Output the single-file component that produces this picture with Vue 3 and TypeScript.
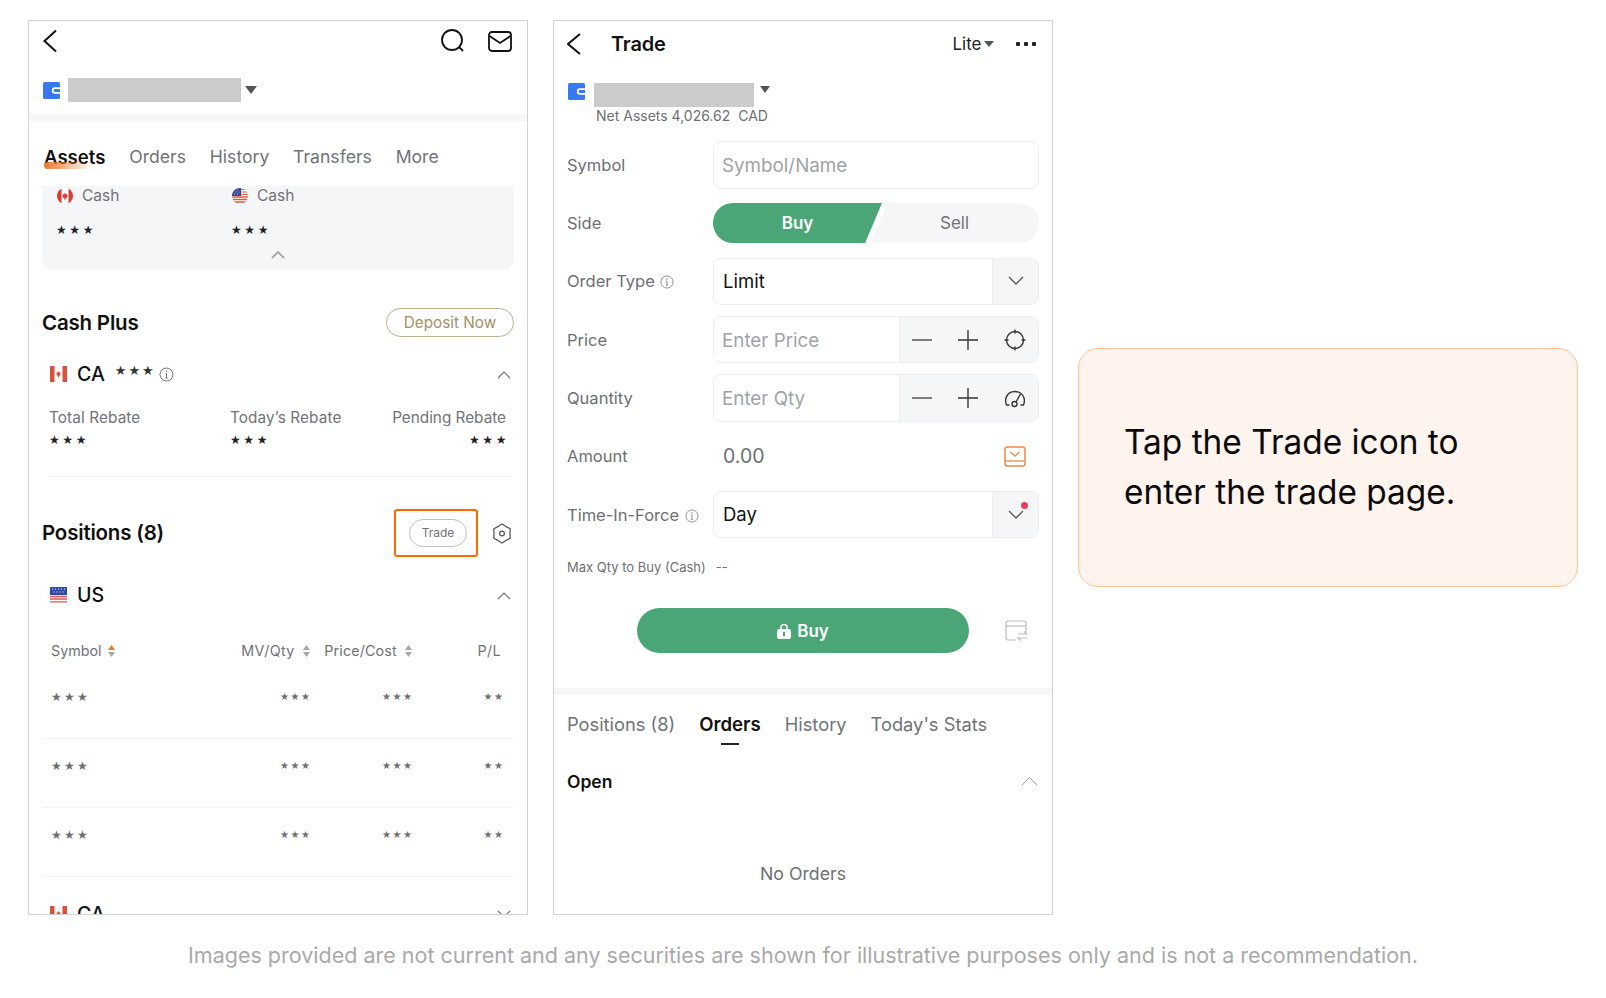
<script setup lang="ts">
const stockRows = [0, 1, 2]
const steppers = [
  { label: 'Price', placeholder: 'Enter Price', kind: 'target' },
  { label: 'Quantity', placeholder: 'Enter Qty', kind: 'gauge' },
]
</script>

<template>
  <div class="page">
    <div class="screens">
      <section class="phone">
        <header class="nav">
          <svg class="ic" width="16" height="24" viewBox="0 0 16 24"><path d="M13 1.500L1.500 12 13 22.500" fill="none" stroke="#111" stroke-width="2"/></svg>
          <span class="grow"></span>
          <svg class="ic" width="26" height="26" viewBox="0 0 26 26"><circle cx="12" cy="12" r="10" fill="none" stroke="#111" stroke-width="1.800"/><path d="M19 19l4 4" stroke="#111" stroke-width="1.800"/></svg>
          <svg class="ic mail" width="24" height="21" viewBox="0 0 24 21"><rect x="1" y="1" width="22" height="19" rx="3" fill="none" stroke="#111" stroke-width="1.800"/><path d="M1.500 5l10.500 7 10.500-7" fill="none" stroke="#111" stroke-width="1.800"/></svg>
        </header>

        <div class="account">
          <svg width="17" height="17" viewBox="0 0 17 17"><rect width="17" height="17" rx="1.500" fill="#3a78f2"/><path d="M17 6.200H12a2.300 2.300 0 0 0 0 4.600H17" fill="none" stroke="#fff" stroke-width="1.800"/></svg>
          <div class="mask wide"></div>
          <span class="caret"></span>
        </div>

        <div class="band"></div>

        <nav class="tabs">
          <span class="tab active">Assets<i class="swoosh"></i></span>
          <span class="tab">Orders</span>
          <span class="tab">History</span>
          <span class="tab">Transfers</span>
          <span class="tab">More</span>
        </nav>

        <div class="cash-card">
          <div class="cash-cols">
            <div class="cash-col">
              <div class="cash-label">
                <svg width="16" height="16" viewBox="0 0 16 16"><defs><clipPath id="rc"><circle cx="8" cy="8" r="8"/></clipPath></defs><g clip-path="url(#rc)"><rect width="16" height="16" fill="#fff"/><rect width="4.500" height="16" fill="#dd3a30"/><rect x="11.500" width="4.500" height="16" fill="#dd3a30"/><path d="M8 4.500l1 2 1.500-.5-.5 2.500 1 .3L8.500 10.500V12h-1v-1.500L5 8.800l1-.3L5.500 6l1.500.5z" fill="#dd3a30"/></g></svg>
                <span>Cash</span>
              </div>
              <div class="stars dark">★★★</div>
            </div>
            <div class="cash-col">
              <div class="cash-label">
                <svg width="16" height="16" viewBox="0 0 16 16"><defs><clipPath id="ru"><circle cx="8" cy="8" r="8"/></clipPath></defs><g clip-path="url(#ru)"><rect width="16" height="16" fill="#fff"/><path d="M0 9h16M0 11.500h16M0 14h16" stroke="#e0564c" stroke-width="1.300"/><path d="M0 1.500h16M0 4h16M0 6.500h16" stroke="#e0564c" stroke-width="1.100"/><rect width="9" height="8" fill="#36479b"/><path d="M2 2h.8M5 2h.8M3.500 4h.8M6.500 4h.8M2 6h.8M5 6h.8" stroke="#fff" stroke-width=".8"/></g></svg>
                <span>Cash</span>
              </div>
              <div class="stars dark">★★★</div>
            </div>
          </div>
          <div class="cash-fold">
            <svg width="14" height="9" viewBox="0 0 14 9"><path d="M1 8l6-6 6 6" fill="none" stroke="#a5a7ab" stroke-width="1.800"/></svg>
          </div>
        </div>

        <div class="section-head plus-head">
          <h2>Cash Plus</h2>
          <span class="deposit">Deposit Now</span>
        </div>

        <div class="market">
          <svg width="17" height="16" viewBox="0 0 17 16"><rect width="17" height="16" fill="#fff"/><rect width="4.500" height="16" fill="#d9503f"/><rect x="12.500" width="4.500" height="16" fill="#d9503f"/><path d="M8.500 5l.8 1.500 1.200-.3-.4 2 .9.300-2 1.600v1.400h-1V10.100L6 8.500l.9-.3-.4-2 1.200.3z" fill="#d9503f"/></svg>
          <strong>CA</strong>
          <span class="stars ca-stars">★★★</span>
          <svg class="info" width="15" height="15" viewBox="0 0 15 15"><circle cx="7.500" cy="7.500" r="6.500" fill="none" stroke="#777" stroke-width="1"/><path d="M7.500 6.500v4.500M6.300 11h2.400M6.500 6.500h1" stroke="#777" stroke-width="1" fill="none"/><circle cx="7.500" cy="4.200" r=".8" fill="#777"/></svg>
          <span class="grow"></span>
          <svg class="fold" width="14" height="9" viewBox="0 0 14 9"><path d="M1 8l6-6 6 6" fill="none" stroke="#6d6f73" stroke-width="1.100"/></svg>
        </div>

        <div class="rebates">
          <div class="rebate first"><span>Total Rebate</span><span class="stars dark">★★★</span></div>
          <div class="rebate second"><span>Today’s Rebate</span><span class="stars dark">★★★</span></div>
          <div class="rebate third"><span>Pending Rebate</span><span class="stars dark">★★★</span></div>
        </div>

        <div class="hair"></div>

        <div class="section-head pos-head">
          <h2>Positions (8)</h2>
          <div class="trade-box"><span class="trade-pill">Trade</span></div>
          <svg class="gear" width="20" height="21" viewBox="0 0 20 21"><path d="M10 1L14 3.570 18.230 5.750 18 10.500 18.230 15.250 14 17.430 10 20 6 17.430 1.770 15.250 2 10.500 1.770 5.750 6 3.570z" fill="none" stroke="#55585c" stroke-width="1.300" stroke-linejoin="round"/><circle cx="10" cy="10.500" r="2.400" fill="none" stroke="#55585c" stroke-width="1.300"/></svg>
        </div>

        <div class="market us">
          <svg width="17" height="16" viewBox="0 0 17 16"><rect width="17" height="16" fill="#fff"/><path d="M0 9.500h17M0 12h17M0 14.800h17" stroke="#e0564c" stroke-width="1.300"/><rect width="17" height="8" fill="#2f4aa6"/><path d="M2 2h1M5 2h1M8 2h1M11 2h1M14 2h1M3.500 5h1M6.500 5h1M9.500 5h1M12.500 5h1" stroke="#fff" stroke-width="1"/></svg>
          <strong>US</strong>
          <span class="grow"></span>
          <svg class="fold" width="14" height="9" viewBox="0 0 14 9"><path d="M1 8l6-6 6 6" fill="none" stroke="#6d6f73" stroke-width="1.100"/></svg>
        </div>

        <div class="thead">
          <span class="col-sym">Symbol
            <svg width="7" height="12" viewBox="0 0 7 12"><path d="M3.500 0L7 5H0z" fill="#ec7a2e"/><path d="M3.500 12L7 7H0z" fill="#a5a7ab"/></svg>
          </span>
          <span class="col-mv">MV/Qty
            <svg width="7" height="12" viewBox="0 0 7 12"><path d="M3.500 0L7 5H0z" fill="#a5a7ab"/><path d="M3.500 12L7 7H0z" fill="#a5a7ab"/></svg>
          </span>
          <span class="col-price">Price/Cost
            <svg width="7" height="12" viewBox="0 0 7 12"><path d="M3.500 0L7 5H0z" fill="#a5a7ab"/><path d="M3.500 12L7 7H0z" fill="#a5a7ab"/></svg>
          </span>
          <span class="col-pl">P/L</span>
        </div>

        <div v-for="r in stockRows" :key="r" class="trow">
          <span class="col-sym stars big">★★★</span>
          <span class="col-mv stars">★★★</span>
          <span class="col-price stars">★★★</span>
          <span class="col-pl stars">★★</span>
        </div>

        <div class="market last">
          <svg width="17" height="16" viewBox="0 0 17 16"><rect width="17" height="16" fill="#fff"/><rect width="4.500" height="16" fill="#d9503f"/><rect x="12.500" width="4.500" height="16" fill="#d9503f"/><path d="M8.500 5l.8 1.500 1.200-.3-.4 2 .9.300-2 1.600v1.400h-1V10.100L6 8.500l.9-.3-.4-2 1.200.3z" fill="#d9503f"/></svg>
          <strong>CA</strong>
          <span class="grow"></span>
          <svg class="fold" width="14" height="9" viewBox="0 0 14 9"><path d="M1 1l6 6 6-6" fill="none" stroke="#6d6f73" stroke-width="1.100"/></svg>
        </div>
      </section>

      <section class="phone">
        <header class="nav trade-nav">
          <svg class="ic" width="16" height="24" viewBox="0 0 16 24"><path d="M13 2L1 12l12 10" fill="none" stroke="#111" stroke-width="2"/></svg>
          <h1>Trade</h1>
          <span class="grow"></span>
          <span class="lite">Lite</span>
          <span class="caret small"></span>
          <span class="dots"><i></i><i></i><i></i></span>
        </header>

        <div class="account trade-account">
          <svg width="17" height="17" viewBox="0 0 17 17"><rect width="17" height="17" rx="1.500" fill="#3a78f2"/><path d="M17 6.200H12a2.300 2.300 0 0 0 0 4.600H17" fill="none" stroke="#fff" stroke-width="1.800"/></svg>
          <div class="mask narrow"></div>
          <span class="caret top"></span>
        </div>
        <div class="net">Net Assets 4,026.62&nbsp; CAD</div>

        <div class="form">
          <div class="frow">
            <label>Symbol</label>
            <div class="field"><span class="ph">Symbol/Name</span></div>
          </div>
          <div class="frow">
            <label>Side</label>
            <div class="side">
              <span class="buy">Buy</span>
              <span class="sell">Sell</span>
            </div>
          </div>
          <div class="frow">
            <label>Order Type
              <svg class="info tight" width="14" height="14" viewBox="0 0 15 15"><circle cx="7.500" cy="7.500" r="6.500" fill="none" stroke="#8a8c90" stroke-width="1"/><path d="M7.500 6.500v4.500M6.300 11h2.400M6.500 6.500h1" stroke="#8a8c90" stroke-width="1" fill="none"/><circle cx="7.500" cy="4.200" r=".8" fill="#8a8c90"/></svg>
            </label>
            <div class="field">
              <span class="val">Limit</span>
              <div class="addon single">
                <svg width="16" height="10" viewBox="0 0 16 10"><path d="M1 1l7 7 7-7" fill="none" stroke="#55585c" stroke-width="1.300"/></svg>
              </div>
            </div>
          </div>

          <div v-for="s in steppers" :key="s.label" class="frow">
            <label>{{ s.label }}</label>
            <div class="field">
              <span class="ph">{{ s.placeholder }}</span>
              <div class="addon triple">
                <svg width="20" height="20" viewBox="0 0 20 20"><path d="M0 10h20" stroke="#55585c" stroke-width="1.400"/></svg>
                <svg width="20" height="20" viewBox="0 0 20 20"><path d="M0 10h20M10 0v20" stroke="#33363a" stroke-width="1.400"/></svg>
                <svg v-if="s.kind === 'target'" width="22" height="22" viewBox="0 0 22 22"><circle cx="11" cy="11" r="8.500" fill="none" stroke="#33363a" stroke-width="1.400"/><path d="M11 0.500v4M11 17.500v4M0.500 11h4M17.500 11h4" stroke="#33363a" stroke-width="1.400"/></svg>
                <svg v-else width="22" height="20" viewBox="0 0 22 20"><path d="M5 17H2.500Q1 13 2 10A9.500 9.500 0 0 1 20 10Q21 13 19.500 17H17" fill="none" stroke="#33363a" stroke-width="1.400" stroke-linecap="round"/><circle cx="10.500" cy="16" r="2.500" fill="none" stroke="#33363a" stroke-width="1.400"/><path d="M12 14l4.500-8" stroke="#33363a" stroke-width="1.400"/></svg>
              </div>
            </div>
          </div>

          <div class="frow">
            <label>Amount</label>
            <div class="amount">
              <span class="amount-val">0.00</span>
              <svg width="22" height="21" viewBox="0 0 22 21"><rect x="1" y="1" width="20" height="19" rx="2.500" fill="none" stroke="#ec8a4a" stroke-width="1.500"/><path d="M1 15h20" stroke="#ec8a4a" stroke-width="1.300"/><path d="M6.500 6l4.500 4 4.500-4" fill="none" stroke="#ec8a4a" stroke-width="1.400"/></svg>
            </div>
          </div>

          <div class="frow">
            <label>Time-In-Force
              <svg class="info tight" width="14" height="14" viewBox="0 0 15 15"><circle cx="7.500" cy="7.500" r="6.500" fill="none" stroke="#8a8c90" stroke-width="1"/><path d="M7.500 6.500v4.500M6.300 11h2.400M6.500 6.500h1" stroke="#8a8c90" stroke-width="1" fill="none"/><circle cx="7.500" cy="4.200" r=".8" fill="#8a8c90"/></svg>
            </label>
            <div class="field">
              <span class="val">Day</span>
              <div class="addon single">
                <svg width="16" height="10" viewBox="0 0 16 10"><path d="M1 1l7 7 7-7" fill="none" stroke="#55585c" stroke-width="1.300"/></svg>
                <i class="dot"></i>
              </div>
            </div>
          </div>
        </div>

        <div class="max"><span>Max Qty to Buy (Cash)</span><span>--</span></div>

        <div class="submit-row">
          <div class="submit">
            <svg width="14" height="16" viewBox="0 0 14 16"><path d="M4 7V4.500a3 3 0 0 1 6 0V7" fill="none" stroke="#fff" stroke-width="1.500"/><rect y="6" width="14" height="10" rx="2" fill="#fff"/><rect x="6" y="9" width="2" height="4" fill="#4aa676"/></svg>
            <span>Buy</span>
          </div>
          <svg class="swap" width="22" height="21" viewBox="0 0 22 21"><path d="M11 20H3a2 2 0 0 1-2-2V3a2 2 0 0 1 2-2h16a2 2 0 0 1 2 2v9" fill="none" stroke="#b9bbbf" stroke-width="1.200"/><path d="M1 6h20" stroke="#b9bbbf" stroke-width="1.200"/><path d="M13 14h9l-3-2.500M22 18h-9l3 2.500" fill="none" stroke="#b9bbbf" stroke-width="1.200"/></svg>
        </div>

        <div class="band trade-band"></div>

        <nav class="tabs lower">
          <span class="tab">Positions (8)</span>
          <span class="tab active">Orders<i class="bar"></i></span>
          <span class="tab">History</span>
          <span class="tab">Today's Stats</span>
        </nav>

        <div class="open">
          <strong>Open</strong>
          <svg width="17" height="10" viewBox="0 0 17 10"><path d="M1 9l7.500-7.500L16 9" fill="none" stroke="#9a9c9f" stroke-width="1"/></svg>
        </div>

        <div class="empty">No Orders</div>
      </section>

      <aside class="callout">Tap the Trade icon to<br />enter the trade page.</aside>
    </div>

    <p class="caption">Images provided are not current and any securities are shown for illustrative purposes only and is not a recommendation.</p>
  </div>
</template>

<style>
html, body { background: #fff; }
</style>

<style scoped>
* { box-sizing: border-box; }
.page { width: 1606px; height: 998px; padding-top: 20px; font-family: Inter, "Liberation Sans", sans-serif; color: #111; overflow: hidden; }
.screens { display: flex; align-items: flex-start; padding-left: 28px; gap: 25px; }
.phone { width: 500px; height: 895px; border: 1px solid #d2d2d2; overflow: hidden; background: #fff; flex: none; }
.grow { flex: 1; }
.nav { height: 40px; display: flex; align-items: center; padding: 0 15px 0 14px; }
.ic.mail { margin-left: 22px; }
.account { display: flex; align-items: center; padding: 17px 0 12px 14px; }
.mask { background: #cbcbcb; height: 24px; }
.mask.wide { width: 173px; margin-left: 8px; }
.mask.narrow { width: 160px; margin-left: 9px; }
.caret { width: 0; height: 0; border-left: 6px solid transparent; border-right: 6px solid transparent; border-top: 8px solid #555; margin-left: 4px; }
.caret.small { border-left-width: 5px; border-right-width: 5px; border-top-width: 6px; margin-left: 2px; }
.caret.top { margin: 3px 0 0 6px; border-left-width: 5.500px; border-right-width: 5.500px; border-top-width: 7px; }
.band { height: 7px; background: #f5f6f6; }

.tabs { display: flex; gap: 23.800px; padding: 24px 0 17px 15px; font-size: 17.600px; line-height: 24px; color: #707377; }
.tab { position: relative; white-space: nowrap; }
.tab.active { color: #111; font-weight: 600; font-size: 18.600px; }
.swoosh { position: absolute; left: 0; top: 17px; width: 48px; height: 7px; border-radius: 4px 0 0 4px; background: linear-gradient(90deg, #ea7b2d, rgba(234,123,45,0)); z-index: 0; }

.cash-card { margin: 0 13px; height: 84px; background: #f5f6f8; border-radius: 0 0 12px 12px; padding-left: 15px; }
.cash-cols { display: flex; }
.cash-col { width: 175px; }
.cash-label { height: 18px; display: flex; align-items: center; gap: 9px; font-size: 15.500px; color: #707377; padding-top: 1px; }
.stars { font-family: "DejaVu Sans", sans-serif; font-size: 12px; letter-spacing: 2.600px; line-height: 16px; color: #6d6f73; white-space: nowrap; }
.stars.dark { color: #222; }
.cash-col .stars { margin-top: 18px; margin-left: -1px; }
.cash-fold { display: flex; justify-content: center; margin-top: 12px; padding-right: 16px; }

.section-head { display: flex; align-items: center; padding: 0 13px; }
.section-head h2 { margin: 0; font-size: 20.500px; font-weight: 600; line-height: 28px; flex: 1; letter-spacing: -0.200px; }
.plus-head { margin-top: 38px; height: 29px; }
.deposit { width: 128px; height: 29px; border: 1px solid #bfae8d; border-radius: 15px; color: #a48f66; font-size: 15.300px; line-height: 27px; text-align: center; }

.market { display: flex; align-items: center; height: 24px; margin-top: 25px; padding: 0 16px 0 21px; }
.market strong { font-size: 19.600px; font-weight: 500; margin-left: 10px; }
.ca-stars { margin-left: 10px; margin-top: -7px; font-size: 13px; letter-spacing: 1.900px; color: #333; }
.info { vertical-align: -2px; margin-left: 3px; }
.info.tight { margin-left: 1px; }
.rebates { display: flex; padding: 0 21px 0 20px; margin-top: 22px; font-size: 15.300px; line-height: 20px; color: #707377; }
.rebate { display: flex; flex-direction: column; gap: 4px; white-space: nowrap; }
.rebate.first { width: 181px; letter-spacing: 0.120px; }
.rebate.second { flex: 1; letter-spacing: 0.120px; }
.rebate.third { align-items: flex-end; }
.rebate.third .stars { margin-right: -3px; }
.hair { margin: 28px 15px 0 19px; height: 1px; background: #f2f3f4; }
.pos-head { margin-top: 32px; height: 48px; padding: 0 15px 0 13px; }
.trade-box { width: 84px; height: 48px; border: 2px solid #ff6a00; border-radius: 3px; display: flex; align-items: center; padding-left: 13px; margin-right: -1px; }
.trade-pill { width: 58px; height: 28px; border: 1px solid #bfc1c4; border-radius: 14px; font-size: 12px; line-height: 26px; color: #707377; text-align: center; }
.gear { margin-left: 15px; }
.market.us { margin-top: 26px; }
.thead, .trow { display: flex; margin: 0 13px; padding: 0 11px 0 9px; }
.thead { margin-top: 34px; height: 20px; line-height: 20px; font-size: 14.300px; color: #707377; }
.thead svg { margin-left: 4px; vertical-align: -1px; }
.thead .col-sym svg { margin-left: 2px; }
.thead .col-mv, .thead .col-pl { letter-spacing: 0.350px; }
.thead .col-price { letter-spacing: 0.150px; }
.col-sym { flex: 1; }
.col-mv { width: 100px; text-align: right; white-space: nowrap; }
.col-price { width: 102px; text-align: right; white-space: nowrap; }
.col-pl { width: 91px; text-align: right; }
.thead .col-pl { padding-right: 2px; }
.trow { height: 69px; padding-top: 19px; border-bottom: 1px solid #f2f3f4; }
.thead + .trow { margin-top: 9px; }
.trow .stars { font-size: 10px; letter-spacing: 1.500px; margin-left: 1.500px; margin-right: -1.500px; }
.trow .stars.big { font-size: 12px; letter-spacing: 2.200px; margin: 0; }
.market.last { margin-top: 25px; }

.trade-nav { height: 46px; padding: 0 16px 0 13px; }
.trade-nav h1 { margin: 0 0 0 28px; font-size: 20px; font-weight: 600; letter-spacing: -0.200px; }
.lite { font-size: 17px; color: #222; }
.dots { display: flex; gap: 3.500px; margin-left: 22px; }
.dots i { width: 4.500px; height: 4px; background: #222; border-radius: 1px; }
.trade-account { padding: 16px 0 0 14px; align-items: flex-start; }
.net { height: 16px; line-height: 16px; padding-left: 42px; font-size: 14px; color: #6d6f73; white-space: nowrap; margin-top: 1px; }
.form { display: flex; flex-direction: column; gap: 10.830px; padding: 0 13px; margin-top: 17px; }
.frow { display: flex; align-items: center; height: 47.500px; }
.frow label { width: 146px; flex: none; font-size: 16.500px; color: #6d6f73; white-space: nowrap; }
.field { flex: 1; height: 47.500px; display: flex; align-items: stretch; border: 1.500px solid #ecedef; border-radius: 8px; overflow: hidden; }
.ph { flex: 1; padding-left: 8px; font-size: 18.800px; line-height: 47px; color: #a0a3a8; }
.val { flex: 1; padding-left: 9px; font-size: 18.500px; line-height: 45px; color: #111; }
.addon { position: relative; display: flex; align-items: center; background: #f5f6f8; border-left: 1px solid #ecedef; flex: none; }
.addon.single { width: 46px; justify-content: center; }
.addon.triple { width: 139px; justify-content: space-between; padding: 0 12px; }
.dot { position: absolute; top: 10px; right: 10px; width: 7px; height: 7px; background: #e4405a; border-radius: 50%; }
.side { flex: 1; display: flex; height: 40px; font-size: 17px; line-height: 40px; text-align: center; }
.buy { width: 169px; background: #4aa676; color: #fff; font-weight: 600; border-radius: 20px 0 0 20px; clip-path: polygon(0 0, 100% 0, 90% 100%, 0 100%); }
.sell { width: 169px; margin-left: -12px; background: #f5f6f8; color: #707377; border-radius: 0 20px 20px 0; clip-path: polygon(18px 0, 100% 0, 100% 100%, 0 100%); }
.amount { flex: 1; display: flex; align-items: center; justify-content: space-between; padding: 0 13px 0 10px; }
.amount-val { font-size: 19.500px; color: #6d6f73; }
.max { display: flex; gap: 10px; margin-top: 21px; padding-left: 13px; height: 16px; line-height: 16px; font-size: 13px; color: #6d6f73; }
.submit-row { display: flex; align-items: center; margin: 33px 0 0 83px; }
.submit { width: 332px; height: 45px; border-radius: 23px; background: #4aa676; color: #fff; display: flex; align-items: center; justify-content: center; gap: 6px; font-size: 17px; font-weight: 600; }
.swap { margin-left: 36px; }
.trade-band { margin-top: 35px; }
.tabs.lower { padding: 17px 0 0 13px; gap: 24px; font-size: 18.300px; }
.tabs.lower .tab.active { font-size: 18.600px; }
.bar { position: absolute; left: 22px; top: 31px; width: 18px; height: 2px; background: #222; }
.open { display: flex; align-items: center; justify-content: space-between; padding: 0 14px 0 13px; margin-top: 33px; height: 24px; }
.open strong { font-size: 17.500px; font-weight: 600; }
.empty { margin-top: 71px; line-height: 20px; font-size: 17.700px; color: #6d6f73; text-align: center; }

.callout { width: 500px; height: 239px; margin-top: 328px; padding: 68px 0 0 45px; background: #fff3ee; border: 1px solid #ffc39a; border-radius: 20px; font-size: 33.400px; line-height: 50px; color: #0b0b0b; white-space: nowrap; flex: none; }
.caption { margin: 25px 0 0; line-height: 30px; text-align: center; font-size: 21.500px; color: #a9a9a9; white-space: nowrap; }
</style>
